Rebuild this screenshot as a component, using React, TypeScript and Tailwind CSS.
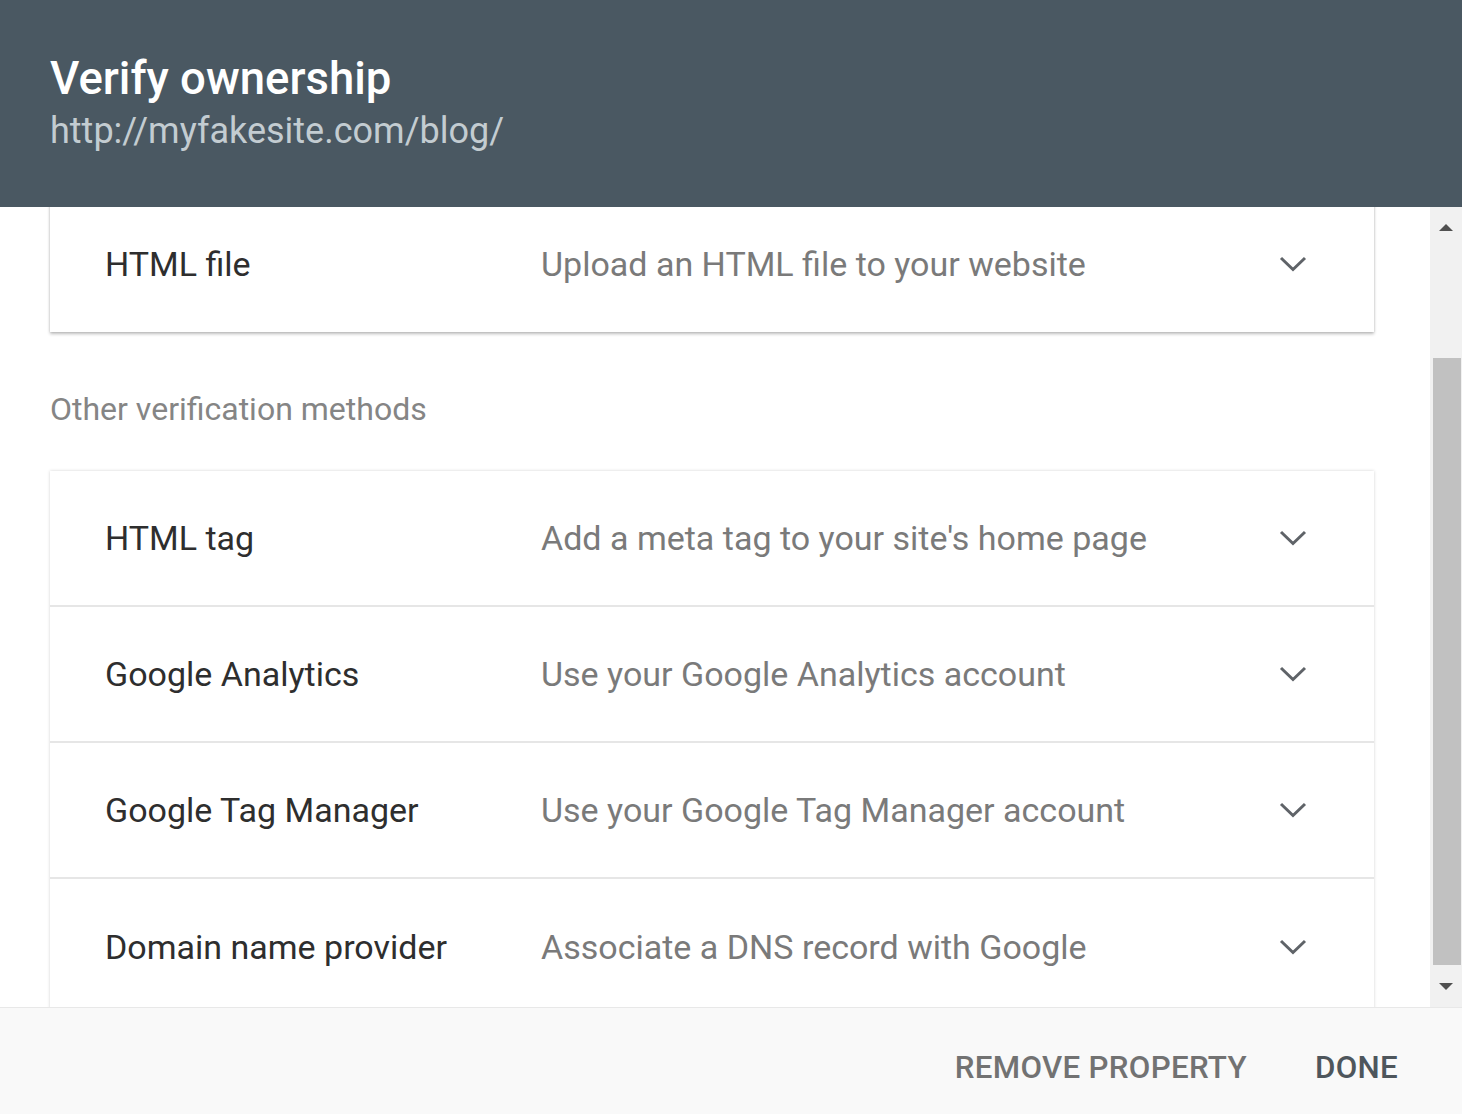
import React from "react";

const Chevron = () => (
  <svg width="28" height="18" viewBox="0 0 28 18" className="text-[#5f6368]">
    <polyline points="2,3 14,14.5 26,3" fill="none" stroke="currentColor" strokeWidth="3" />
  </svg>
);

const Row = ({ label, desc, last }: { label: string; desc: string; last?: boolean }) => (
  <div className={`flex items-center h-[136px] pl-[55px] pr-[67px] ${last ? "" : "border-b-2 border-[#e6e6e6]"}`}>
    <div className="w-[436px] text-[34px] text-[#2e2e2e] leading-none">{label}</div>
    <div className="flex-1 text-[34px] text-[#7a7a7a] leading-none">{desc}</div>
    <Chevron />
  </div>
);

export default function App() {
  return (
    <div
      className="w-[1462px] h-[1114px] flex flex-col bg-white overflow-hidden"
      style={{ fontFamily: "Roboto, 'Noto Sans', sans-serif" }}
    >
      <div className="h-[207px] shrink-0 bg-[#4a5862] pl-[50px] pt-[52px]">
        <div className="text-[45.5px] font-medium text-white leading-[54px]">Verify ownership</div>
        <div className="text-[36px] text-[#c3ccd1] leading-[44px] mt-[3px]">http://myfakesite.com/blog/</div>
      </div>
      <div className="h-[800px] shrink-0 flex">
        <div className="flex-1 overflow-hidden pl-[50px] pr-[56px]">
          <div className="-mt-[11px] bg-white shadow-[0_2px_3px_rgba(0,0,0,0.25),0_0_2px_rgba(0,0,0,0.12)]">
            <Row label="HTML file" desc="Upload an HTML file to your website" last />
          </div>
          <div className="mt-[61px] text-[32px] text-[#858585] leading-none">Other verification methods</div>
          <div className="mt-[46px] bg-white shadow-[0_0_3px_rgba(0,0,0,0.18)]">
            <Row label="HTML tag" desc="Add a meta tag to your site's home page" />
            <Row label="Google Analytics" desc="Use your Google Analytics account" />
            <Row label="Google Tag Manager" desc="Use your Google Tag Manager account" />
            <Row label="Domain name provider" desc="Associate a DNS record with Google" last />
          </div>
        </div>
        <div className="w-[32px] bg-[#f1f1f1] flex flex-col items-center">
          <div className="h-[40px] w-full flex items-center justify-center">
            <div className="w-0 h-0 border-l-[7px] border-r-[7px] border-b-[7px] border-l-transparent border-r-transparent border-b-[#505050]" />
          </div>
          <div className="h-[111px]" />
          <div className="w-[28px] ml-[2px] h-[607px] bg-[#c1c1c1]" />
          <div className="flex-1 w-full flex items-center justify-center">
            <div className="w-0 h-0 border-l-[7px] border-r-[7px] border-t-[7px] border-l-transparent border-r-transparent border-t-[#505050]" />
          </div>
        </div>
      </div>
      <div className="flex-1 bg-[#f9f9f9] border-t border-[#e8e8e8] flex items-center justify-end pr-[64px] gap-[68px] pt-[14px]">
        <div className="text-[31.3px] font-medium text-[#727272] tracking-[0.3px]">REMOVE PROPERTY</div>
        <div className="text-[31.3px] font-medium text-[#4e565c] tracking-[0.3px]">DONE</div>
      </div>
    </div>
  );
}
